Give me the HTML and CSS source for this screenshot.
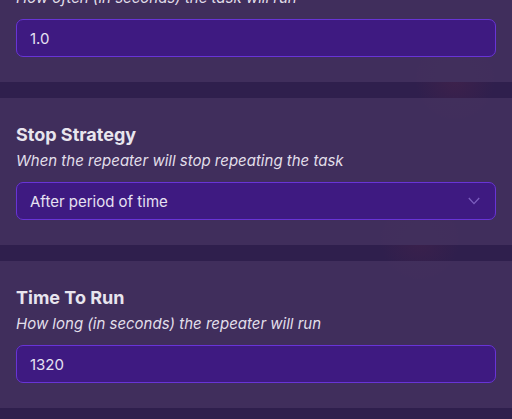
FILE: index.html
```html
<!DOCTYPE html>
<html>
<head>
<meta charset="utf-8">
<link rel="stylesheet" href="styles.css">
</head>
<body>
<div class="viewport">
  <div class="list">
    <section class="card">
      <h2 class="title">Run Interval</h2>
      <p class="hint">How often (in seconds) the task will run</p>
      <div class="field">1.0</div>
    </section>
    <section class="card">
      <h2 class="title">Stop Strategy</h2>
      <p class="hint">When the repeater will stop repeating the task</p>
      <div class="field select">
        <span>After period of time</span>
        <svg class="chev" width="12" height="8" viewBox="0 0 12 8"><path d="M0.8 1 L6 6.6 L11.2 1" fill="none" stroke="#7c5fbf" stroke-width="1.3"/></svg>
      </div>
    </section>
    <section class="card">
      <h2 class="title">Time To Run</h2>
      <p class="hint">How long (in seconds) the repeater will run</p>
      <div class="field">1320</div>
    </section>
  </div>
</div>
</body>
</html>
```
FILE: styles.css
```css
html, body {
  margin: 0;
  padding: 0;
}
body {
  width: 512px;
  height: 419px;
  overflow: hidden;
  background-color: #2f1f4d;
  background-image:
    radial-gradient(circle at 455px 80px, rgba(110, 40, 70, 0.22), rgba(110, 40, 70, 0) 40px),
    radial-gradient(circle at 420px 240px, rgba(110, 40, 70, 0.18), rgba(110, 40, 70, 0) 40px);
  font-family: Inter, "Noto Sans", sans-serif;
  color: #e7e3ee;
}
.viewport {
  height: 419px;
  overflow: hidden;
}
.list {
  display: flex;
  flex-direction: column;
  gap: 16px;
  margin-top: -65px;
}
.card {
  background: rgba(66, 48, 94, 0.94);
  padding: 25px 16px 25px;
  height: 147px;
  box-sizing: border-box;
}
.title {
  margin: 0 0 4px;
  font-size: 18px;
  line-height: 24px;
  font-weight: 700;
  color: #e8e5ee;
}
.hint {
  margin: 0 0 11px;
  font-size: 15px;
  line-height: 20px;
  font-style: italic;
  color: #e2dfea;
}
.field {
  box-sizing: border-box;
  height: 38px;
  border: 1px solid #6834d6;
  border-radius: 7px;
  background: #3e1a81;
  padding: 0 14px 0 13px;
  display: flex;
  align-items: center;
  font-size: 15px;
  color: #e6e1f2;
}
.select {
  justify-content: space-between;
}
.chev {
  display: block;
  margin-right: 1px;
}
```
